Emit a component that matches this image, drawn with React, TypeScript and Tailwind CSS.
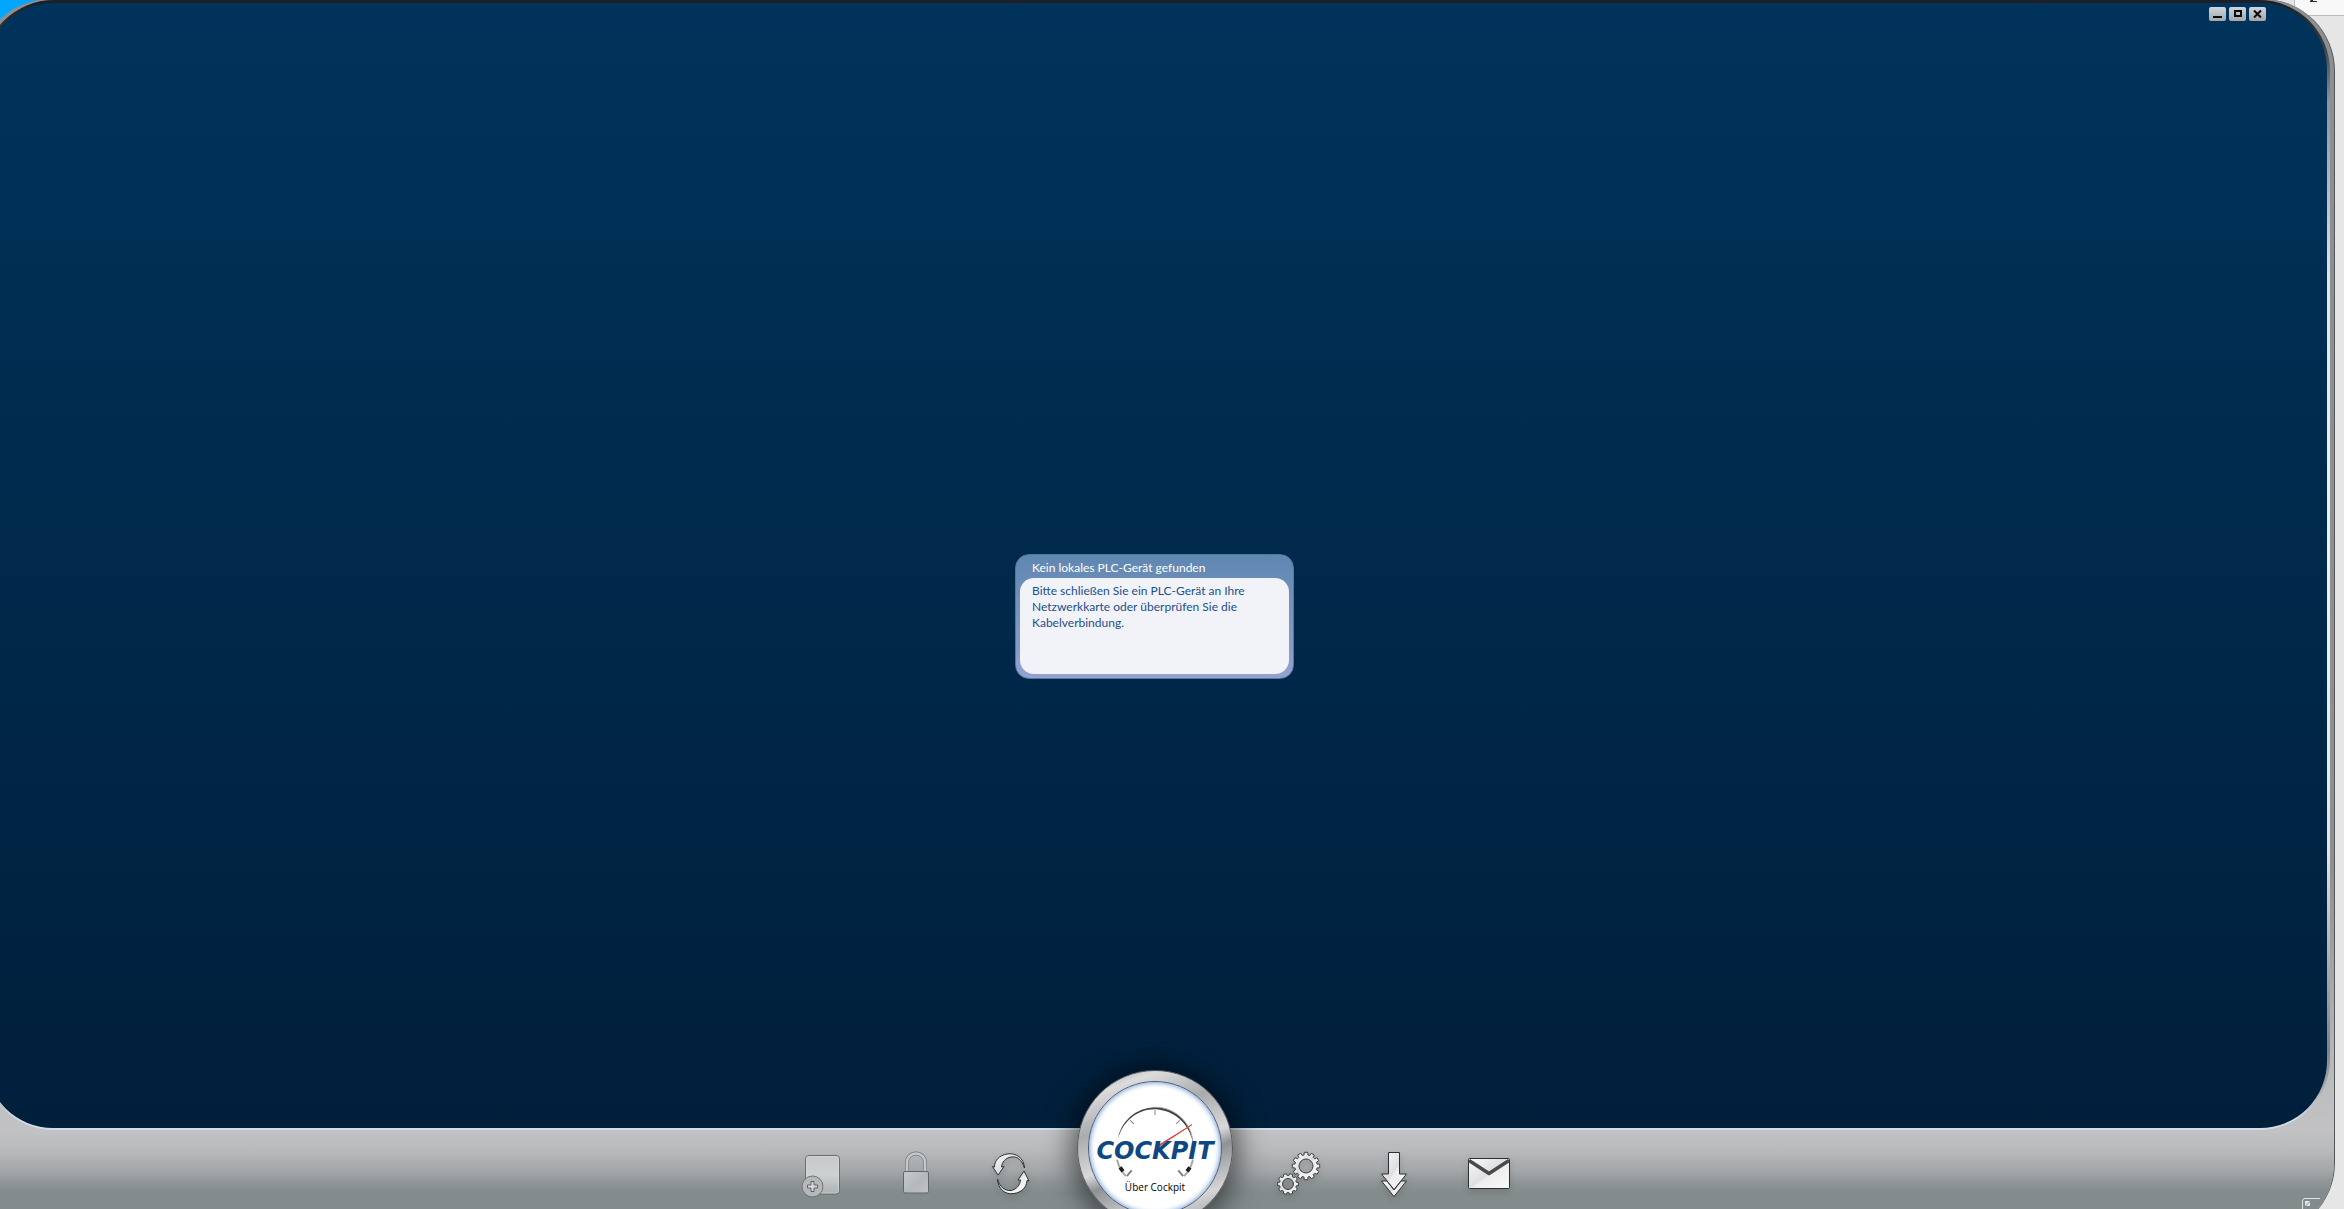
import React from 'react';

const gearPath = (cx: number, cy: number, outer: number, inner: number, teeth: number) => {
  const points: string[] = [];
  const step = (Math.PI * 2) / teeth;
  for (let i = 0; i < teeth; i++) {
    const a = i * step;
    [[-0.34, inner], [-0.24, outer], [0.24, outer], [0.34, inner]].forEach(([t, r]) => {
      points.push(`${(cx + Math.cos(a + t * step) * r).toFixed(2)} ${(cy + Math.sin(a + t * step) * r).toFixed(2)}`);
    });
  }
  return `M${points.join('L')}Z`;
};

const holePath = (cx: number, cy: number, r: number) =>
  `M${cx - r} ${cy}a${r} ${r} 0 1 0 ${r * 2} 0a${r} ${r} 0 1 0 ${-r * 2} 0Z`;

// Shared gradients for the toolbar icons
const IconDefs: React.FC = () => (
  <svg className="absolute w-0 h-0" aria-hidden="true">
    <defs>
      <linearGradient id="metal" x1="0" y1="0" x2="1" y2="1">
        <stop offset="0" stopColor="#fafafa" />
        <stop offset="0.5" stopColor="#dfdfe1" />
        <stop offset="0.55" stopColor="#eeeeef" />
        <stop offset="1" stopColor="#f8f8f8" />
      </linearGradient>
      <linearGradient id="dim" x1="0" y1="0" x2="0" y2="1">
        <stop offset="0" stopColor="#c6c8c9" />
        <stop offset="0.5" stopColor="#ced1d2" />
        <stop offset="1" stopColor="#adb1b3" />
      </linearGradient>
      <linearGradient id="dimLock" x1="0" y1="0" x2="1" y2="1">
        <stop offset="0" stopColor="#c8cacc" />
        <stop offset="0.55" stopColor="#b5b8ba" />
        <stop offset="1" stopColor="#c2c5c7" />
      </linearGradient>
    </defs>
  </svg>
);

const AddDeviceIcon = () => (
  <svg className="w-12 h-12" viewBox="0 0 48 48" fill="none">
    <rect x="8.5" y="5.5" width="34" height="38.5" rx="3.5" fill="url(#dim)" stroke="#666c6f" />
    <rect x="9.5" y="6.5" width="32" height="36.5" rx="2.5" stroke="#dfe1e2" strokeOpacity="0.5" />
    <circle cx="15.5" cy="36.5" r="10.5" fill="#b4b8b9" stroke="#6c7275" />
    <path d="M14 31.5h3v3.5h3.5v3H17v3.5h-3V38h-3.5v-3H14Z" fill="#d6d8d9" stroke="#5c6265" />
  </svg>
);

const LockIcon = () => (
  <svg className="w-12 h-12" viewBox="0 0 48 48" fill="none">
    <path d="M15 22v-9.5a9 9 0 0 1 18 0V22" stroke="#757b7e" strokeWidth="4" />
    <path d="M15 22v-9.5a9 9 0 0 1 18 0V22" stroke="#c6c9cb" strokeWidth="2.5" />
    <rect x="11.5" y="21.5" width="25" height="21.5" rx="1.5" fill="url(#dimLock)" stroke="#606669" />
  </svg>
);

const RefreshIcon = () => (
  <svg className="w-12 h-12" viewBox="0 0 48 48" fill="url(#metal)" stroke="#2c3032" strokeLinejoin="round">
    <path d="M37.5 18C37 8 29 2.5 20 4C12 5.5 7.5 10.5 7.5 17L5.5 16.5L11 25L17 16.5L14.5 17C15 12 18.5 8 24 7C30 6 35 10 37.5 18Z" />
    <path d="M10.5 29C11 39 18 45 27 43.5C34 42.5 39.5 38 40 30.5L42 31L37 21L31 30L33.5 30C33 35 29.5 39.5 24 40.5C18 41 12.5 37 10.5 29Z" />
  </svg>
);

const SettingsIcon = () => (
  <svg className="w-12 h-12" viewBox="0 0 48 48" fill="url(#metal)" stroke="#3c4042" strokeLinejoin="round">
    <path fillRule="evenodd" d={gearPath(31, 16, 13.8, 11.2, 12) + holePath(31, 16, 7)} />
    <path fillRule="evenodd" d={gearPath(13, 34, 10.5, 8.5, 10) + holePath(13, 34, 5.5)} />
  </svg>
);

const DownloadIcon = () => (
  <svg className="w-12 h-12" viewBox="0 0 48 48" fill="url(#metal)" stroke="#2c3032" strokeLinejoin="round">
    <path d="M11.5 31H17L24 40L31 31H36.5L24 46.5Z" />
    <path d="M18.5 2.5H29.5V24H36.5L24 39.5L11.5 24H18.5Z" />
  </svg>
);

const MailIcon = () => (
  <svg className="w-12 h-12" viewBox="0 0 48 48" fill="url(#metal)" stroke="#2c3032" strokeLinejoin="round">
    <rect x="3.5" y="8.5" width="41" height="30" rx="1" />
    <path d="M4 10.5L24 23.5L44 10.5" fill="none" stroke="#474b4e" strokeWidth="3.5" />
  </svg>
);

interface ToolButtonProps {
  label: string;
  disabled?: boolean;
  children: React.ReactNode;
}

const ToolButton: React.FC<ToolButtonProps> = ({ label, disabled, children }) => (
  <button
    type="button"
    aria-label={label}
    disabled={disabled}
    className={disabled ? 'w-12 h-12' : 'w-12 h-12 drop-shadow-md cursor-pointer'}
  >
    {children}
  </button>
);

const WindowButton: React.FC<{ label: string; children: React.ReactNode }> = ({ label, children }) => (
  <button
    type="button"
    aria-label={label}
    className="w-[17px] h-3.5 rounded-xs bg-linear-to-b from-[#cfd6de] to-[#a3a7ac]"
  >
    <svg className="w-[17px] h-3.5" viewBox="0 0 17 14" fill="none" stroke="#0a0a0a" strokeWidth="2">
      {children}
    </svg>
  </button>
);

const Gauge = () => (
  <svg className="absolute inset-0 w-full h-full" viewBox="0 0 136 136" fill="none">
    <path d="M29.5 60A39 39 0 0 1 68 26C89 26 105 42 107 61C102 42 88 29 68 28C48 28 34 42 29.5 60Z" fill="#3f4143" />
    <path d="M68 26C89 26 105 42 107 61" stroke="#9c9ea0" />
    {[-45, 0, 45].map((deg) => (
      <path key={deg} d="M68 29V34" stroke="#7e8082" transform={`rotate(${deg} 68 65)`} />
    ))}
    <path d="M29 80Q31 90 38 97M107 80Q105 90 98 97" stroke="#a3a5a7" strokeWidth="2" />
    <path d="M32 88L35 92M104 88L101 92" stroke="#1d1f20" strokeWidth="4" />
    <path d="M39 97L44 91M97 97L92 91" stroke="#7e8082" strokeWidth="2" />
    <path d="M71 67L106 44L72 65Z" fill="#d8493a" stroke="#d8493a" />
  </svg>
);

const AboutDial = () => (
  <button
    type="button"
    className="relative -mt-15 w-39 h-39 p-2.5 rounded-full cursor-pointer border border-[#55585b] bg-linear-[160deg,#8e9092_0%,#dcdcdd_14%,#a9abad_32%,#d9d9da_52%,#8f9193_60%,#d5d5d6_80%,#8b8d8f_100%] shadow-[0_2px_28px_6px_rgba(0,0,0,0.55)]"
  >
    <span className="relative flex flex-col items-center w-full h-full rounded-full bg-white border border-[#4c5f7c] shadow-[inset_0_0_5px_1px_#7fa3d4]">
      <Gauge />
      <span className="relative mt-[57px] font-['DejaVu_Sans',sans-serif] text-2xl leading-6 font-bold italic text-[#0d4885]">
        COCKPIT
      </span>
      <span className="relative mt-[18px] font-['Open_Sans',sans-serif] text-[10px] leading-3 text-black">
        Über Cockpit
      </span>
    </span>
  </button>
);

const App: React.FC = () => {
  return (
    <div className="relative h-screen overflow-hidden bg-linear-to-r from-[#00a6ff] from-50% to-[#e7e6e7] to-50% font-[Lato,sans-serif]">
      <IconDefs />
      {/* corner of the window behind */}
      <div className="absolute top-0 right-0 flex w-[50px] h-4 pl-[15px] bg-[#f8f8f8] border-b border-l border-[#bcbcbc]">
        <svg className="w-[7px] h-0.5" viewBox="0 0 7 2" aria-hidden="true">
          <path d="M1 0H3V1H7V2H0V1Z" fill="#2a2a2a" />
        </svg>
      </div>

      <div className="relative -ml-[22px] -mt-px mr-[9px] h-[calc(100%+27px)] flex flex-col rounded-[72px] overflow-hidden border-r border-[#54565a] bg-linear-[180deg,#8a9091_0%,#8f8f8f_45%,#8f8f8f_70%,#bcbdbf_88%,#c3c3c5_92%]">
        <div className="flex-1 flex mt-px ml-[5px] mr-[4px] pt-[3px] px-[3px] pb-0.5 rounded-[71px] bg-linear-[180deg,#1b1e25_0%,#3a3c42_4%,#8f90a0_9%,#dfe8ef_25%,#e8f4fb_50%,#dfe8ef_75%,#808285_93%,#a5a5a8_96%,#cfdeea_99%]">
          <main className="flex-1 flex flex-col rounded-[67px] bg-linear-to-b from-[#00335b] to-[#001f3b]">
            <header className="flex justify-end gap-[3px] pt-1 pr-[61px]">
              <WindowButton label="Minimieren">
                <path d="M4 10H13" />
              </WindowButton>
              <WindowButton label="Maximieren">
                <rect x="6" y="4" width="6" height="5" />
              </WindowButton>
              <WindowButton label="Schließen">
                <path d="M5 3.5L12 10.5M12 3.5L5 10.5" />
              </WindowButton>
            </header>

            <div className="flex-1 flex items-center justify-center pt-[84px] pr-1">
              <section className="w-[279px] h-[125px] px-1 pb-1 flex flex-col rounded-[14px] border border-[#4f78a5] bg-linear-to-b from-[#5e87b1] to-[#95a2ce]">
                <h1 className="pl-3 pt-[3px] h-[23px] text-xs leading-5 text-white">Kein lokales PLC-Gerät gefunden</h1>
                <p className="flex-1 rounded-[14px] bg-[#f1f3f8] pl-3 pr-8 pt-[5px] text-xs leading-4 text-[#1d4f8e]">
                  Bitte schließen Sie ein PLC-Gerät an Ihre Netzwerkkarte oder überprüfen Sie die Kabelverbindung.
                </p>
              </section>
            </div>
          </main>
        </div>

        <footer className="relative flex justify-center items-start gap-[42px] h-[105px] pr-0.5 bg-linear-[180deg,#c3c3c5_0%,#b7b9bb_20%,#a4a8aa_38%,#8f9597_50%,#838b8d_60%]">
          <div className="flex gap-[47px] mt-5">
            <ToolButton label="Gerät hinzufügen" disabled>
              <AddDeviceIcon />
            </ToolButton>
            <ToolButton label="Sicherheit" disabled>
              <LockIcon />
            </ToolButton>
            <ToolButton label="Aktualisieren">
              <RefreshIcon />
            </ToolButton>
          </div>
          <AboutDial />
          <div className="flex gap-[47px] mt-5">
            <ToolButton label="Optionen">
              <SettingsIcon />
            </ToolButton>
            <ToolButton label="Herunterladen">
              <DownloadIcon />
            </ToolButton>
            <ToolButton label="Nachricht">
              <MailIcon />
            </ToolButton>
          </div>
          <button type="button" aria-label="Größe ändern" className="absolute right-0 top-[68px] w-8 h-9">
            <svg className="w-8 h-9" viewBox="0 0 32 36" fill="none" stroke="#e2e5e6">
              <path d="M0.5 36V3Q0.5 0.5 3 0.5H18" />
              <path d="M3 3H8L3 8ZM8 4V8H4Z" fill="#e2e5e6" stroke="none" />
            </svg>
          </button>
        </footer>
      </div>
    </div>
  );
};

export default App;
